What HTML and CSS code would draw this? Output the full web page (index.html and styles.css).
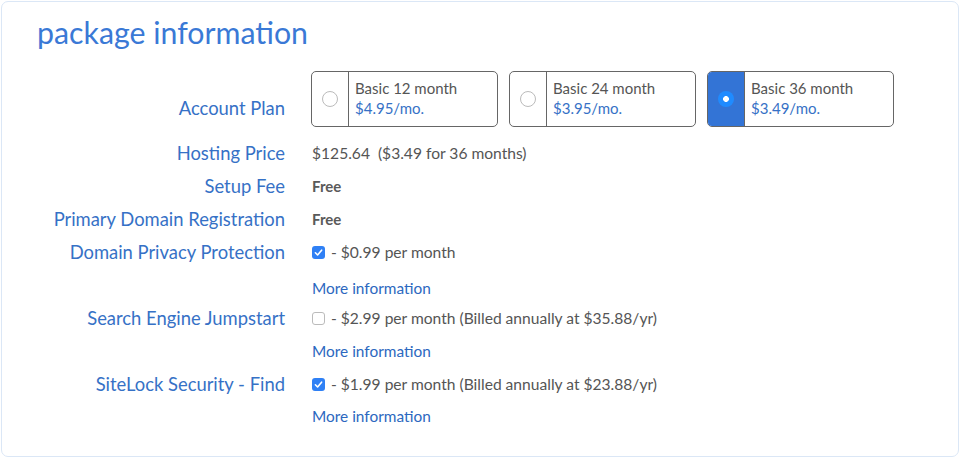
FILE: index.html
```html
<!DOCTYPE html>
<html>
<head>
<meta charset="utf-8">
<link rel="stylesheet" href="styles.css">
</head>
<body>
<div class="panel">
  <h1 class="title">package information</h1>
  <div class="form">
    <div class="label label-plan">Account Plan</div>
    <div class="plans">
      <div class="plan">
        <div class="plan-radio"><span class="radio"></span></div>
        <div class="plan-text"><div class="plan-name">Basic 12 month</div><div class="plan-price">$4.95/mo.</div></div>
      </div>
      <div class="plan">
        <div class="plan-radio"><span class="radio"></span></div>
        <div class="plan-text"><div class="plan-name">Basic 24 month</div><div class="plan-price">$3.95/mo.</div></div>
      </div>
      <div class="plan plan-active">
        <div class="plan-radio"><span class="radio radio-on"></span></div>
        <div class="plan-text"><div class="plan-name">Basic 36 month</div><div class="plan-price">$3.49/mo.</div></div>
      </div>
    </div>

    <div class="label r-hosting">Hosting Price</div>
    <div class="value r-hosting">$125.64&nbsp; ($3.49 for 36 months)</div>

    <div class="label r-std">Setup Fee</div>
    <div class="value r-std"><span class="free">Free</span></div>

    <div class="label r-std">Primary Domain Registration</div>
    <div class="value r-std"><span class="free">Free</span></div>

    <div class="label r-std">Domain Privacy Protection</div>
    <div class="value r-std"><span class="check check-on"><svg viewBox="0 0 13 13" width="13" height="13"><path d="M3.4 6.8 L5.6 9 L9.6 4.2" fill="none" stroke="#fff" stroke-width="1.6" stroke-linecap="round" stroke-linejoin="round"/></svg></span> - $0.99 per month</div>
    <div class="spacer r-more"></div>
    <div class="value r-more"><a class="more">More information</a></div>

    <div class="label r-opt">Search Engine Jumpstart</div>
    <div class="value r-opt"><span class="check"></span> - $2.99 per month (Billed annually at $35.88/yr)</div>
    <div class="spacer r-more2"></div>
    <div class="value r-more2"><a class="more">More information</a></div>

    <div class="label r-site">SiteLock Security - Find</div>
    <div class="value r-site"><span class="check check-on"><svg viewBox="0 0 13 13" width="13" height="13"><path d="M3.4 6.8 L5.6 9 L9.6 4.2" fill="none" stroke="#fff" stroke-width="1.6" stroke-linecap="round" stroke-linejoin="round"/></svg></span> - $1.99 per month (Billed annually at $23.88/yr)</div>
    <div class="spacer r-more3"></div>
    <div class="value r-more3"><a class="more">More information</a></div>
  </div>
</div>
</body>
</html>
```
FILE: styles.css
```css
html, body {
  margin: 0;
  padding: 0;
  background: #ffffff;
}
body {
  font-family: Lato, "Open Sans", sans-serif;
  padding: 1px 1px 0 1px;
}
.panel {
  width: 956px;
  height: 454px;
  border: 1px solid #dbe7f6;
  border-radius: 7px;
  box-sizing: content-box;
  overflow: hidden;
}
.title {
  margin: 0;
  padding: 11px 0 0 35px;
  font-size: 30.3px;
  font-weight: 400;
  color: #3a79d6;
  height: 56px;
  line-height: 38px;
  box-sizing: border-box;
}
.form {
  display: grid;
  grid-template-columns: 283px 1fr;
  column-gap: 27px;
  padding-top: 13px;
}
.label {
  text-align: right;
  color: #3671c6;
  font-size: 18.4px;
  line-height: 33px;
  white-space: nowrap;
}
.label-plan {
  align-self: end;
  line-height: 20px;
  padding-bottom: 9px;
}
.plans {
  display: flex;
  gap: 11px;
  margin-left: -1px;
}
.plan {
  display: flex;
  width: 187px;
  height: 56px;
  border: 1px solid #666;
  border-radius: 5px;
  box-sizing: border-box;
  overflow: hidden;
}
.plan-radio {
  width: 36px;
  border-right: 1px solid #666;
  display: flex;
  align-items: center;
  justify-content: center;
  flex-shrink: 0;
}
.plan-active .plan-radio {
  background: #3374d6;
}
.radio {
  width: 14px;
  height: 14px;
  border: 1px solid #bbb;
  border-radius: 50%;
  background: #fff;
}
.radio-on {
  width: 16px;
  height: 16px;
  border: none;
  background: radial-gradient(circle, #fff 0 2.6px, #1f8bff 3.2px);
}
.plan-text {
  padding: 6px 0 0 6px;
  font-size: 15px;
  line-height: 20px;
}
.plan-name {
  color: #555;
}
.plan-price {
  color: #3671c6;
}
.value {
  color: #555;
  font-size: 15.6px;
  line-height: 33px;
  display: flex;
  align-items: center;
  white-space: pre;
}
.r-hosting { margin-top: 10px; }
.r-more.value { margin-top: 3px; }
.r-opt.value, .r-opt.label { line-height: 26px; }
.r-more2.value { padding-top: 4px; }
.r-site.value, .r-site.label { line-height: 32px; }
.free {
  font-weight: 700;
  color: #5a5a5a;
  font-size: 15px;
}
.check {
  display: inline-block;
  width: 11px;
  height: 11px;
  border: 1px solid #bbb;
  border-radius: 3px;
  margin-right: 2px;
  flex-shrink: 0;
}
.check-on {
  width: 13px;
  height: 13px;
  border: none;
  background: #2f80f5;
}
.check svg { display: block; }
.more {
  color: #2c68c0;
  font-size: 15.4px;
}
```
